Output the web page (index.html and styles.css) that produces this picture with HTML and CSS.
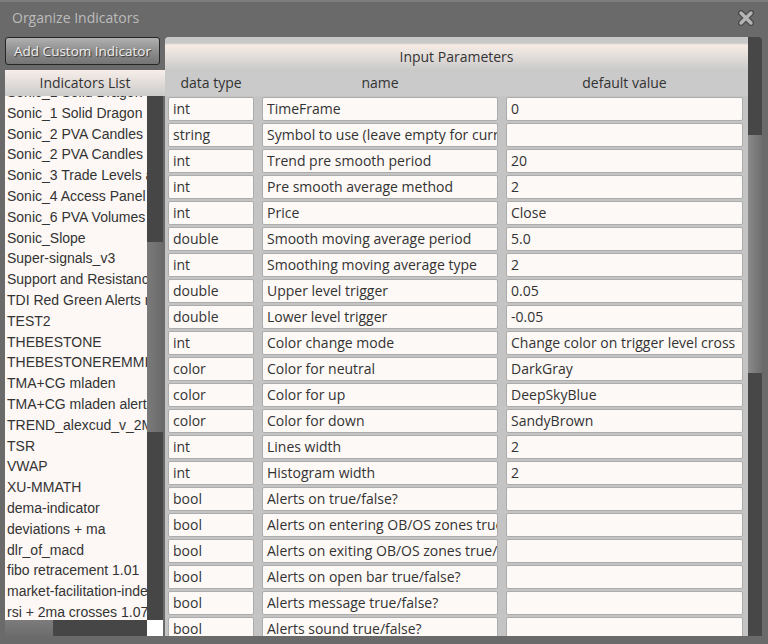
FILE: index.html
```html
<!DOCTYPE html>
<html lang="en">
<head>
    <meta charset="UTF-8">
    <meta name="viewport" content="width=device-width, initial-scale=1.0">
    <title>Organize Indicators</title>
    <link rel="stylesheet" href="styles.css">
</head>
<body>
    <div class="window">
        <div class="titlebar">
            <span class="title">Organize Indicators</span>
            <svg class="close" width="16" height="16" viewBox="0 0 16 16">
                <path d="M3 3 L13 13 M13 3 L3 13" stroke="#4a4a4a" stroke-width="6" stroke-linecap="round"/>
                <path d="M3 3 L13 13 M13 3 L3 13" stroke="#b4b4b4" stroke-width="3.4" stroke-linecap="round"/>
            </svg>
        </div>

        <div class="content">
            <div class="left">
                <button class="add-btn">Add Custom Indicator</button>
                <div class="list-header">Indicators List</div>
                <div class="list-body">
                    <div class="list">
                        <ul id="indicatorList"></ul>
                    </div>
                    <div class="vscroll">
                        <div class="thumb"></div>
                    </div>
                </div>
                <div class="hscroll-row">
                    <div class="hscroll"><div class="hthumb"></div></div>
                    <div class="corner"></div>
                </div>
            </div>

            <div class="right">
                <div class="params">
                    <div class="params-title">Input Parameters</div>
                    <div class="grid col-heads">
                        <div>data type</div>
                        <div>name</div>
                        <div>default value</div>
                    </div>
                    <div class="grid rows" id="paramRows"></div>
                </div>
                <div class="rscroll">
                    <div class="thumb"></div>
                </div>
            </div>
        </div>
    </div>

    <script>
        document.addEventListener('DOMContentLoaded', function() {
            const indicators = [
                'Sonic_1 Solid Dragon',
                'Sonic_1 Solid Dragon',
                'Sonic_2 PVA Candles',
                'Sonic_2 PVA Candles',
                'Sonic_3 Trade Levels alerts',
                'Sonic_4 Access Panel',
                'Sonic_6 PVA Volumes',
                'Sonic_Slope',
                'Super-signals_v3',
                'Support and Resistance',
                'TDI Red Green Alerts mtf',
                'TEST2',
                'THEBESTONE',
                'THEBESTONEREMMI',
                'TMA+CG mladen',
                'TMA+CG mladen alerts',
                'TREND_alexcud_v_2MTF',
                'TSR',
                'VWAP',
                'XU-MMATH',
                'dema-indicator',
                'deviations + ma',
                'dlr_of_macd',
                'fibo retracement 1.01',
                'market-facilitation-index',
                'rsi + 2ma crosses 1.07'
            ];

            const params = [
                ['int', 'TimeFrame', '0'],
                ['string', 'Symbol to use (leave empty for current)', ''],
                ['int', 'Trend pre smooth period', '20'],
                ['int', 'Pre smooth average method', '2'],
                ['int', 'Price', 'Close'],
                ['double', 'Smooth moving average period', '5.0'],
                ['int', 'Smoothing moving average type', '2'],
                ['double', 'Upper level trigger', '0.05'],
                ['double', 'Lower level trigger', '-0.05'],
                ['int', 'Color change mode', 'Change color on trigger level cross'],
                ['color', 'Color for neutral', 'DarkGray'],
                ['color', 'Color for up', 'DeepSkyBlue'],
                ['color', 'Color for down', 'SandyBrown'],
                ['int', 'Lines width', '2'],
                ['int', 'Histogram width', '2'],
                ['bool', 'Alerts on true/false?', ''],
                ['bool', 'Alerts on entering OB/OS zones true/false?', ''],
                ['bool', 'Alerts on exiting OB/OS zones true/false?', ''],
                ['bool', 'Alerts on open bar true/false?', ''],
                ['bool', 'Alerts message true/false?', ''],
                ['bool', 'Alerts sound true/false?', '']
            ];

            const list = document.getElementById('indicatorList');
            indicators.forEach(name => {
                const li = document.createElement('li');
                li.textContent = name;
                list.appendChild(li);
            });

            const rows = document.getElementById('paramRows');
            params.forEach(row => {
                row.forEach(value => {
                    const cell = document.createElement('div');
                    cell.className = 'cell';
                    cell.textContent = value;
                    rows.appendChild(cell);
                });
            });
        });
    </script>
</body>
</html>
```

FILE: styles.css
```css
body {
    margin: 0;
    width: 768px;
    height: 644px;
    overflow: hidden;
    background-color: #6a6a6a;
    font-family: 'Open Sans', 'Noto Sans', sans-serif;
    color: #333;
}
.window {
    height: 644px;
    border-top: 2px solid #7c7c7c;
    box-sizing: border-box;
}
.titlebar {
    height: 35px;
    display: flex;
    align-items: center;
    justify-content: space-between;
    padding: 0 14px 4px 12px;
    box-sizing: border-box;
}
.title {
    color: #bcbcbc;
    font-size: 14px;
}
.content {
    display: flex;
    padding-left: 5px;
    height: 599px;
}
.left {
    width: 160px;
    display: flex;
    flex-direction: column;
}
.add-btn {
    width: 155px;
    height: 28px;
    margin-bottom: 5px;
    border: 1px solid #262626;
    border-radius: 3px;
    background: linear-gradient(#b0b0b0, #8c8c8c 55%, #747474);
    color: #efefef;
    font-family: 'Open Sans', sans-serif;
    font-size: 13.5px;
    text-shadow: 1px 1px 1px #333;
    padding: 0;
    cursor: pointer;
}
.list-header {
    height: 26px;
    line-height: 26px;
    text-align: center;
    font-size: 14px;
    background: linear-gradient(#f7eee9, #e6e0dc 40%, #cbcbcb);
}
.list-body {
    display: flex;
    height: 524px;
    width: 158px;
}
.list {
    width: 142px;
    overflow: hidden;
    background-color: #fdf8f5;
}
.list ul {
    list-style: none;
    margin: -14px 0 0 0;
    padding: 0 0 0 2px;
    font-family: 'Liberation Sans', Arial, sans-serif;
    font-size: 14px;
    line-height: 20.8px;
    color: #333;
    white-space: nowrap;
}
.vscroll {
    width: 16px;
    background-color: #464646;
    padding-top: 146px;
    box-sizing: border-box;
}
.vscroll .thumb {
    height: 190px;
    background: linear-gradient(to right, #7a7a7a, #6a6a6a);
}
.hscroll-row {
    display: flex;
    height: 16px;
}
.hscroll {
    width: 142px;
    background-color: #464646;
}
.hthumb {
    width: 48px;
    height: 16px;
    background: linear-gradient(#7c7c7c, #6c6c6c);
}
.corner {
    width: 16px;
    background-color: #ffffff;
}
.right {
    display: flex;
    width: 597px;
    border-radius: 4px 4px 0 0;
    overflow: hidden;
}
.params {
    width: 583px;
    background-color: #c4c4c4;
    overflow: hidden;
}
.params-title {
    height: 33px;
    line-height: 40px;
    text-align: center;
    font-size: 14px;
    background: linear-gradient(#c8c8c8 0, #c8c8c8 6px, #f7ebe4 8px, #e8e2de 50%, #cacaca);
}
.grid {
    display: grid;
    grid-template-columns: 86px 236px 237px;
    column-gap: 8px;
    padding-left: 3px;
}
.col-heads {
    height: 26px;
    line-height: 26px;
    text-align: center;
    font-size: 14px;
    background-color: #cacaca;
}
.rows {
    row-gap: 2px;
    padding-top: 1px;
}
.cell {
    height: 24px;
    line-height: 22px;
    box-sizing: border-box;
    padding: 0 4px;
    font-size: 14px;
    background-color: #fdf9f6;
    border: 1px solid #acacac;
    border-radius: 2px;
    white-space: nowrap;
    overflow: hidden;
}
.rscroll {
    width: 14px;
    background-color: #474747;
    padding-top: 98px;
    box-sizing: border-box;
}
.rscroll .thumb {
    height: 238px;
    background: linear-gradient(to right, #8a8a8a, #6e6e6e);
}
```
